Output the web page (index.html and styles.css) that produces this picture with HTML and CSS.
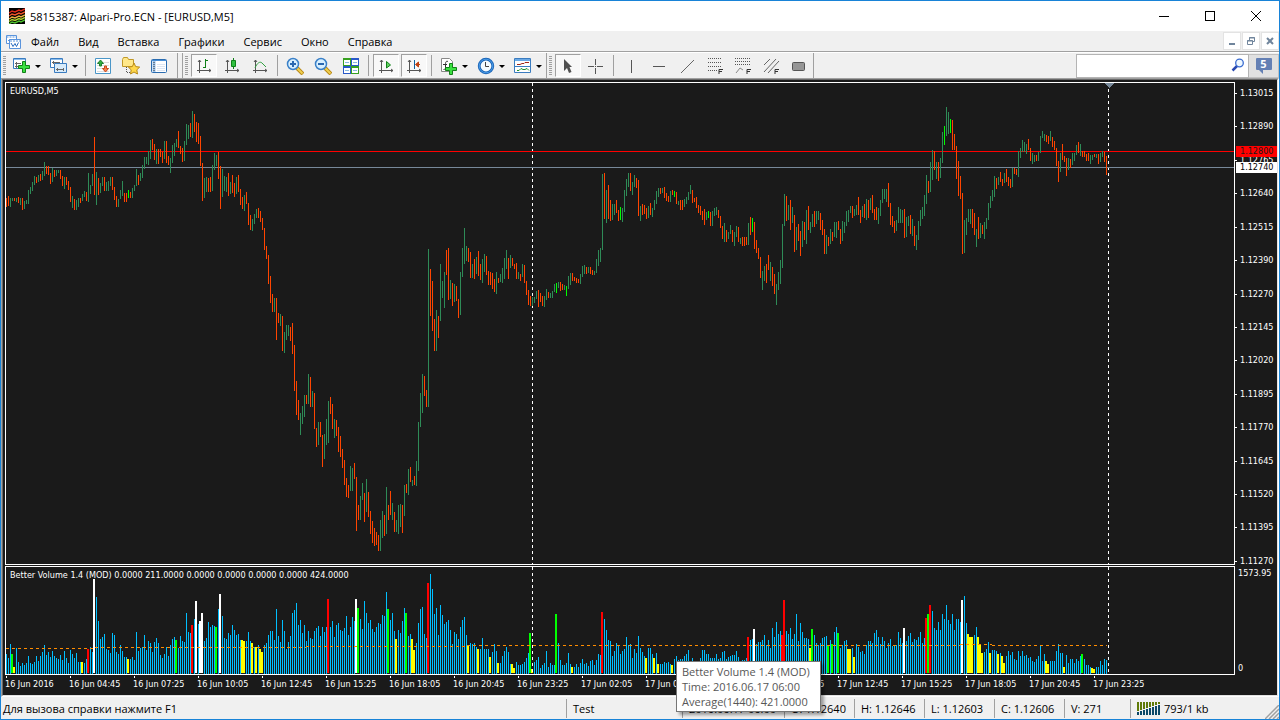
FILE: index.html
```html
<!DOCTYPE html>
<html lang="ru">
<head>
  <meta charset="UTF-8">
  <meta name="viewport" content="width=device-width, initial-scale=1.0">
  <title>5815387: Alpari-Pro.ECN - [EURUSD,M5]</title>
  <link rel="stylesheet" href="styles.css">
</head>
<body>
  <div class="window">
    <header class="title-bar">
      <svg class="app-logo" viewBox="0 0 16 16">
        <rect width="16" height="16" fill="#000"/>
        <g fill="none" stroke-width="1.4">
          <path d="M0 5l3-2 3 1 4-2 2 1 4-2" stroke="#e02a1a"/>
          <path d="M0 8l3-2 3 1 4-2 2 1 4-2" stroke="#f0542a"/>
          <path d="M0 11l3-2 3 1 4-2 2 1 4-2" stroke="#e8b040"/>
          <path d="M0 13.500l3-2 3 1 4-2 2 1 4-2" stroke="#a8d030"/>
          <path d="M0 16l3-2 3 1 4-2 2 1 4-2" stroke="#4cc030"/>
        </g>
      </svg>
      <h1 class="title-text">5815387: Alpari-Pro.ECN - [EURUSD,M5]</h1>
      <div class="window-controls">
        <button class="window-btn" aria-label="Свернуть"><svg viewBox="0 0 10 10"><path d="M0 5.500h10"/></svg></button>
        <button class="window-btn" aria-label="Развернуть"><svg viewBox="0 0 10 10"><path d="M.5 .5h9v9h-9z"/></svg></button>
        <button class="window-btn" aria-label="Закрыть"><svg class="smooth" viewBox="0 0 10 10"><path d="M0 0l10 10M10 0L0 10"/></svg></button>
      </div>
    </header>

    <nav class="menu-bar">
      <svg class="menu-icon" viewBox="0 0 15 15">
        <g fill="#fff" stroke="#5a94dc">
          <path d="M.5 1.500h10v8h-10z"/>
          <path d="M.5 3h10" stroke-dasharray="2 1"/>
          <path d="M2 7l2-2 1 2 2-2" fill="none"/>
          <path d="M3.500 5.500h11v9h-11z"/>
          <path d="M4 7h10" stroke-dasharray="2 1"/>
          <path d="M5 9l2 3.500 2-3 1.500 3 2-4" fill="none" stroke="#2a6cc0"/>
        </g>
      </svg>
      <button class="menu-item">Файл</button>
      <button class="menu-item">Вид</button>
      <button class="menu-item">Вставка</button>
      <button class="menu-item">Графики</button>
      <button class="menu-item">Сервис</button>
      <button class="menu-item">Окно</button>
      <button class="menu-item">Справка</button>
      <div class="mdi-controls">
        <button class="mdi-btn" aria-label="Свернуть график"><svg viewBox="0 0 10 10"><path d="M2 8h6" stroke-width="2"/></svg></button>
        <button class="mdi-btn" aria-label="Восстановить график"><svg viewBox="0 0 10 10"><path d="M3.500 4V1.500h5v4H7M3 2h6M1.500 4.500h5v4h-5zM1 5h6"/></svg></button>
        <button class="mdi-btn" aria-label="Закрыть график"><svg class="smooth" viewBox="0 0 10 10"><path d="M2 2l6 6M8 2L2 8" stroke-width="2"/></svg></button>
      </div>
    </nav>

    <div class="toolbar">
      <div class="tool-group">
        <span class="grip"></span>
        <button class="tool-btn drop" aria-label="Новый график">
          <svg class="icon" viewBox="0 0 18 18">
            <path d="M.5 1.500h12v10H.5z" fill="#fff" stroke="#3a7cc0"/>
            <path d="M1 2.500h11" stroke="#8abcec"/>
            <path d="M2 6.500h6M2 9.500h4M3.500 5v6" stroke="#666" fill="none"/>
            <path d="M9.500 4.500h3v4h4v3h-4v4h-3v-4h-4v-3h4z" fill="#3ae040" stroke="#128018"/>
          </svg>
          <span class="arrow"></span>
        </button>
        <button class="tool-btn drop" aria-label="Профили">
          <svg class="icon" viewBox="0 0 18 18">
            <path d="M.5 1.500h12v9H.5z" fill="#fff" stroke="#3a7cc0"/>
            <path d="M1 2.500h11" stroke="#8abcec"/>
            <path d="M4.500 6.500h12v9h-12z" fill="#d8ebfa" stroke="#3a7cc0"/>
            <path d="M2 5.500h8M3.500 4v3M6 12.500h8M7.500 11v3M13.500 11v3" stroke="#666"/>
          </svg>
          <span class="arrow"></span>
        </button>
        <span class="sep"></span>
        <button class="tool-btn" aria-label="Обзор рынка">
          <svg class="icon" viewBox="0 0 18 18">
            <path d="M1.500 1.500h15v15h-15z" fill="#fff" stroke="#4a96c8"/>
            <path d="M3 5.500h12M3 8.500h12M3 11.500h12M3 14.500h12" stroke="#ddd"/>
            <path d="M6.500 3l3 3.500h-2V9h-2V6.500h-2z" fill="#30b040" stroke="#208030"/>
            <path d="M11.500 15l-3-3.500h2V9h2v2.500h2z" fill="#f08050" stroke="#d04818"/>
          </svg>
        </button>
        <button class="tool-btn" aria-label="Избранное">
          <svg class="icon" viewBox="0 0 18 18">
            <path d="M.5 2.500l1-2h4l1 2h5v7H.5z" fill="#ffe88a" stroke="#c09828"/>
            <path d="M4.500 10v6M5 15.500h5" stroke="#555" stroke-dasharray="1 1"/>
            <path d="M12 6l1.700 3.600 4 .5-2.900 2.700.7 4.200-3.500-2-3.500 2 .7-4.200-2.900-2.700 4-.5z" fill="#ffd84a" stroke="#b88a18"/>
          </svg>
        </button>
        <button class="tool-btn" aria-label="Терминал">
          <svg class="icon" viewBox="0 0 18 18">
            <rect x="1.500" y="2.500" width="15" height="13" rx="1" fill="#fff" stroke="#2a6cb0"/>
            <path d="M2 3.500h14" stroke="#4a90d8"/>
            <path d="M4 4v11" stroke="#9ec4ec" stroke-width="3"/>
            <path d="M4 5v10" stroke="#333" stroke-dasharray="1 1"/>
            <path d="M7 7.500h8M7 9.500h8M7 11.500h8M7 13.500h8" stroke="#dce6f4"/>
          </svg>
        </button>
      </div>

      <div class="tool-group">
        <span class="grip"></span>
        <button class="tool-btn pressed" aria-label="Бары">
          <svg class="icon" viewBox="0 0 18 18">
            <path d="M4.500 3v13M2 13.500h14M3 5l1.500-2L6 5M14 12l2 1.500-2 1.500" fill="none" stroke="#555"/>
            <path d="M10.500 2v9M10.500 3.500H13M8 10.500h2.500" stroke="#108018"/>
          </svg>
        </button>
        <button class="tool-btn" aria-label="Свечи">
          <svg class="icon" viewBox="0 0 18 18">
            <path d="M4.500 3v13M2 13.500h14M3 5l1.500-2L6 5M14 12l2 1.500-2 1.500" fill="none" stroke="#555"/>
            <path d="M10.500 1v11" stroke="#108018"/>
            <path d="M8.500 3.500h4v6h-4z" fill="#30c040" stroke="#108018"/>
          </svg>
        </button>
        <button class="tool-btn" aria-label="Линия">
          <svg class="icon" viewBox="0 0 18 18">
            <path d="M4.500 3v13M2 13.500h14M3 5l1.500-2L6 5M14 12l2 1.500-2 1.500" fill="none" stroke="#555"/>
            <path d="M4 11c2-5 5-7 7-5l4 4" fill="none" stroke="#30a040"/>
          </svg>
        </button>
        <span class="sep"></span>
        <button class="tool-btn" aria-label="Увеличить">
          <svg class="icon" viewBox="0 0 18 18">
            <path d="M11 11l6 6" stroke="#b88818" stroke-width="4"/>
            <path d="M11 11l5.500 5.500" stroke="#f0d050" stroke-width="2"/>
            <circle cx="7" cy="7" r="5.500" fill="#d8f0ff" stroke="#3a80c8" stroke-width="1.500"/>
            <path d="M4 7h6M7 4v6" stroke="#2a68b0" stroke-width="2"/>
          </svg>
        </button>
        <button class="tool-btn" aria-label="Уменьшить">
          <svg class="icon" viewBox="0 0 18 18">
            <path d="M11 11l6 6" stroke="#b88818" stroke-width="4"/>
            <path d="M11 11l5.500 5.500" stroke="#f0d050" stroke-width="2"/>
            <circle cx="7" cy="7" r="5.500" fill="#d8f0ff" stroke="#3a80c8" stroke-width="1.500"/>
            <path d="M4 7h6" stroke="#2a68b0" stroke-width="2"/>
          </svg>
        </button>
        <button class="tool-btn" aria-label="Окна мозаикой">
          <svg class="icon" viewBox="0 0 18 18">
            <path d="M1 1h8v8H1zM9 9h8v8H9z" fill="#38a020"/>
            <path d="M9 1h8v8H9zM1 9h8v8H1z" fill="#2858c8"/>
            <path d="M2 3h6v5H2zM10 3h6v5h-6zM2 11h6v5H2zM10 11h6v5h-6z" fill="#fff"/>
            <path d="M3 5.500h4M11 5.500h4M3 13.500h4M11 13.500h4" stroke="#8ab8e0"/>
          </svg>
        </button>
        <span class="sep"></span>
        <button class="tool-btn pressed" aria-label="Автопрокрутка">
          <svg class="icon" viewBox="0 0 18 18">
            <path d="M4.500 3v13M2 13.500h14M3 5l1.500-2L6 5M14 12l2 1.500-2 1.500" fill="none" stroke="#555"/>
            <path d="M9.500 4.500l4 3.500-4 3z" fill="#60d060" stroke="#108018"/>
          </svg>
        </button>
        <button class="tool-btn pressed" aria-label="Сдвиг графика">
          <svg class="icon" viewBox="0 0 18 18">
            <path d="M4.500 3v13M2 13.500h14M3 5l1.500-2L6 5M14 12l2 1.500-2 1.500" fill="none" stroke="#555"/>
            <path d="M9.500 3v9" stroke="#1060a0"/>
            <path d="M11 7.500h4M13.500 5l-3 2.500 3 2.500z" fill="#c04010" stroke="#c04010"/>
          </svg>
        </button>
        <span class="sep"></span>
        <button class="tool-btn drop" aria-label="Индикаторы">
          <svg class="icon" viewBox="0 0 18 18">
            <path d="M1.500 1.500h8l3 3v10h-11z" fill="#fff" stroke="#888"/>
            <path d="M8 4.500C5.500 3.500 5.500 6 5.500 8v3c0 1-1 1.500-2 1.500M3 7.500h4" fill="none" stroke="#333"/>
            <path d="M9.500 6.500h3v4h4v3h-4v4h-3v-4h-4v-3h4z" fill="#3ae040" stroke="#128018"/>
          </svg>
          <span class="arrow"></span>
        </button>
        <button class="tool-btn drop" aria-label="Периоды">
          <svg class="icon" viewBox="0 0 18 18">
            <circle cx="9" cy="9" r="6.800" fill="#f4fbff" stroke="#1c66b8" stroke-width="2.800"/>
            <circle cx="9" cy="9" r="6.800" fill="none" stroke="#4a9ce8"/>
            <path d="M8.500 5v4.500H12" fill="none" stroke="#444"/>
          </svg>
          <span class="arrow"></span>
        </button>
        <button class="tool-btn drop" aria-label="Шаблоны">
          <svg class="icon" viewBox="0 0 18 18">
            <path d="M.5 1.500h16v14H.5z" fill="#fff" stroke="#3a7cc0"/>
            <path d="M1 3h15" stroke="#6aa8e4" stroke-width="2"/>
            <path d="M1 9.500h15" stroke="#3a7cc0"/>
            <path d="M3 7.500h3l2-1h2l1-1h4" fill="none" stroke="#a02818"/>
            <path d="M3 13.500h2l2-2 2 1h2l2-1 2 2" fill="none" stroke="#209030"/>
          </svg>
          <span class="arrow"></span>
        </button>
      </div>

      <div class="tool-group">
        <span class="grip"></span>
        <button class="tool-btn pressed" aria-label="Курсор">
          <svg class="icon" viewBox="0 0 18 18"><path d="M5 2v12l3-3 2 5 2.500-1-2-5H13z" fill="#505050"/></svg>
        </button>
        <button class="tool-btn" aria-label="Перекрестие">
          <svg class="icon" viewBox="0 0 18 18"><path d="M8.500 2v6M8.500 11v6M1 9.500h6M10 9.500h6M8 9.500h1" stroke="#555"/></svg>
        </button>
        <span class="sep"></span>
        <button class="tool-btn" aria-label="Вертикальная линия">
          <svg class="icon" viewBox="0 0 18 18"><path d="M9.500 3v13" stroke="#555"/></svg>
        </button>
        <button class="tool-btn" aria-label="Горизонтальная линия">
          <svg class="icon" viewBox="0 0 18 18"><path d="M3 9.500h12" stroke="#555"/></svg>
        </button>
        <button class="tool-btn" aria-label="Трендовая линия">
          <svg class="icon" viewBox="0 0 18 18"><path d="M3 16L16 3" stroke="#666"/></svg>
        </button>
        <button class="tool-btn" aria-label="Уровни Фибоначчи">
          <svg class="icon" viewBox="0 0 18 18">
            <path d="M2 1.500h14M2 5.500h14M2 9.500h14M2 13.500h9" stroke="#555" stroke-dasharray="1 1"/>
            <path d="M13 17v-4.500h4M13 14.500h3" fill="none" stroke="#333"/>
          </svg>
        </button>
        <button class="tool-btn" aria-label="Расширение Фибоначчи">
          <svg class="icon" viewBox="0 0 18 18">
            <path d="M1 1.500h16M1 4.500h16M1 7.500h16" stroke="#555" stroke-dasharray="1 1"/>
            <path d="M2 16l4-5 3 2" fill="none" stroke="#888"/>
            <path d="M13 17v-4.500h4M13 14.500h3" fill="none" stroke="#333"/>
          </svg>
        </button>
        <button class="tool-btn" aria-label="Канал Фибоначчи">
          <svg class="icon" viewBox="0 0 18 18">
            <path d="M2 8l6-6M2 15L14 2M6 16L17 4" stroke="#666"/>
            <path d="M13 17v-4.500h4M13 14.500h3" fill="none" stroke="#333"/>
          </svg>
        </button>
        <button class="tool-btn" aria-label="Прямоугольник">
          <svg class="icon" viewBox="0 0 18 18"><rect x="2.500" y="5.500" width="12" height="8" rx="1" fill="#969696" stroke="#555"/></svg>
        </button>
      </div>

      <div class="search-box">
        <input class="search-input" type="text" aria-label="Поиск">
        <svg class="search-icon" viewBox="0 0 14 14">
          <path d="M1.500 12.500l5-5" stroke="#2848b0" stroke-width="2.500"/>
          <circle cx="8.500" cy="5" r="3.800" fill="#eef8ff" stroke="#3a6cd0" stroke-width="1.300"/>
        </svg>
      </div>
      <button class="chat-btn"><span class="bubble">5</span></button>
    </div>

    <main class="chart-frame">
      <div class="chart-window">
        <section class="pane">
          <svg class="plot" id="pricePlot"></svg>
          <span class="pane-title">EURUSD,M5</span>
        </section>
        <div class="price-axis">
          <ol class="price-list">
            <li>1.13015</li>
            <li>1.12890</li>
            <li>1.12765</li>
            <li>1.12640</li>
            <li>1.12515</li>
            <li>1.12390</li>
            <li>1.12270</li>
            <li>1.12145</li>
            <li>1.12020</li>
            <li>1.11895</li>
            <li>1.11770</li>
            <li>1.11645</li>
            <li>1.11520</li>
            <li>1.11395</li>
            <li>1.11270</li>
          </ol>
          <span class="price-tag ask">1.12800</span>
          <span class="price-tag bid">1.12740</span>
        </div>

        <section class="pane">
          <svg class="plot" id="volumePlot"></svg>
          <span class="pane-title">Better Volume 1.4 (MOD) 0.0000 211.0000 0.0000 0.0000 0.0000 0.0000 424.0000</span>
        </section>
        <div class="volume-axis">
          <span>1573.95</span>
          <span>0</span>
        </div>

        <ol class="time-axis">
          <li>16 Jun 2016</li>
          <li>16 Jun 04:45</li>
          <li>16 Jun 07:25</li>
          <li>16 Jun 10:05</li>
          <li>16 Jun 12:45</li>
          <li>16 Jun 15:25</li>
          <li>16 Jun 18:05</li>
          <li>16 Jun 20:45</li>
          <li>16 Jun 23:25</li>
          <li>17 Jun 02:05</li>
          <li>17 Jun 04:45</li>
          <li>17 Jun 07:25</li>
          <li>17 Jun 10:05</li>
          <li>17 Jun 12:45</li>
          <li>17 Jun 15:25</li>
          <li>17 Jun 18:05</li>
          <li>17 Jun 20:45</li>
          <li>17 Jun 23:25</li>
        </ol>
      </div>
    </main>

    <footer class="status-bar">
      <span class="status-cell help">Для вызова справки нажмите F1</span>
      <span class="status-cell profile">Test</span>
      <span class="status-cell date">2016.06.17 06:00</span>
      <span class="status-cell">O: 1.12640</span>
      <span class="status-cell">H: 1.12646</span>
      <span class="status-cell">L: 1.12603</span>
      <span class="status-cell">C: 1.12606</span>
      <span class="status-cell volume">V: 271</span>
      <span class="status-cell traffic">
        <svg class="traffic-icon" viewBox="0 0 23 13">
          <path d="M1 0v9M4 0v8M7 0v7M10 0v6M13 0v5M16 0v4M19 0v3M22 0v2" stroke="#5f7a08" stroke-width="2"/>
          <path d="M1 10v3M4 9v4M7 8v5M10 7v6M13 6v7M16 5v8M19 4v9M22 3v10" stroke="#0c4868" stroke-width="2"/>
        </svg>
        793/1 kb
      </span>
      <svg class="resize-grip" viewBox="0 0 14 14"><path d="M0 14L14 0M4 14L14 4M8 14l6-6M12 14l2-2" stroke="#a0a0a0" stroke-width="1.500"/></svg>
    </footer>

    <div class="tooltip" role="tooltip">
      <p>Better Volume 1.4 (MOD)</p>
      <p>Time: 2016.06.17 06:00</p>
      <p>Average(1440): 421.0000</p>
    </div>
  </div>

  <script src="chart.js"></script>
</body>
</html>
```

FILE: styles.css
```css
:root {
  --accent: #1883d7;
  --face: #f0f0f0;
  --line: #a0a0a0;
  --line-dark: #696969;
  --line-light: #e3e3e3;
  --chart-bg: #1a1a1a;
  --ui-font: "Open Sans", "Noto Sans", sans-serif;
  --chart-font: "DejaVu Sans Condensed", "DejaVu Sans", sans-serif;
}
* {
  box-sizing: border-box;
}
body {
  margin: 0;
  font-family: var(--ui-font);
  font-size: 11px;
  color: #000;
}
button {
  margin: 0;
  padding: 0;
  border: none;
  background: none;
  font: inherit;
  color: inherit;
}
svg {
  display: block;
}
ol {
  list-style: none;
  margin: 0;
  padding: 0;
}
.window {
  position: relative;
  height: 100vh;
  display: flex;
  flex-direction: column;
  border: 1px solid var(--accent);
  background: var(--face);
  overflow: hidden;
}

/* title bar */
.title-bar {
  flex: none;
  height: 30px;
  display: flex;
  align-items: center;
  padding-left: 8px;
  background: #fff;
}
.app-logo {
  width: 16px;
  height: 16px;
}
.title-text {
  margin: 0 auto 0 5px;
  font-size: 11px;
  font-weight: 400;
}
.window-controls {
  display: flex;
}
.window-btn {
  width: 46px;
  height: 30px;
  display: flex;
  align-items: center;
  justify-content: center;
}
.window-btn svg {
  width: 10px;
  height: 10px;
  fill: none;
  stroke: #000;
  shape-rendering: crispEdges;
}
.window-btn .smooth,
.mdi-btn .smooth {
  shape-rendering: auto;
}

/* menu */
.menu-bar {
  flex: none;
  height: 21px;
  display: flex;
  align-items: center;
  gap: 1px;
  padding-left: 5px;
  border-bottom: 1px solid var(--line);
}
.menu-icon {
  width: 15px;
  height: 15px;
}
.menu-item {
  padding: 0 9px;
}
.mdi-controls {
  margin-left: auto;
  display: flex;
  gap: 1px;
}
.mdi-btn {
  width: 18px;
  height: 18px;
  display: flex;
  align-items: center;
  justify-content: center;
  background: #fff;
  border: 1px solid var(--line-light);
}
.mdi-btn svg {
  width: 10px;
  height: 10px;
  fill: none;
  stroke: #70859c;
}

/* toolbar */
.toolbar {
  flex: none;
  height: 26px;
  display: flex;
  align-items: center;
  border-top: 1px solid #fff;
}
.tool-group {
  height: 25px;
  display: flex;
  align-items: center;
  border-right: 1px solid var(--line);
}
.tool-group:first-child {
  margin-right: 4px;
  padding-right: 4px;
}
.tool-group:nth-child(2) {
  border-left: 1px solid var(--line);
}
.grip {
  width: 3px;
  height: 19px;
  margin: 0 2px;
  background: repeating-linear-gradient(to bottom, var(--line) 0 1px, var(--face) 1px 2px);
}
.sep {
  width: 1px;
  height: 21px;
  margin: 0 3px;
  background: var(--line);
}
.tool-btn {
  width: 28px;
  height: 23px;
  display: flex;
  align-items: flex-start;
  padding: 3px 0 0 5px;
}
.tool-btn.drop {
  width: 37px;
  gap: 4px;
}
.tool-btn.pressed {
  width: 26px;
  margin: 0 1px;
  padding: 2px 0 0 3px;
  background: #f8f8f8;
  border: 1px solid;
  border-color: var(--line) #fff #fff var(--line);
}
.icon {
  flex: none;
  width: 18px;
  height: 18px;
}
.arrow {
  margin-top: 8px;
  border: 3px solid transparent;
  border-top-color: #000;
  border-bottom: none;
}
.search-box {
  position: relative;
  width: 173px;
  height: 24px;
  margin-left: auto;
}
.search-input {
  width: 100%;
  height: 100%;
  padding: 0 24px 0 4px;
  border: 1px solid #b4b4b4;
  background: #fff;
  font: inherit;
}
.search-icon {
  position: absolute;
  top: 4px;
  right: 4px;
  width: 14px;
  height: 14px;
}
.chat-btn {
  width: 30px;
  height: 24px;
  display: flex;
  align-items: center;
  justify-content: center;
  background: #e1e1e1;
  border: 1px solid #c0c0c0;
  border-left: none;
}
.bubble {
  position: relative;
  width: 16px;
  height: 12px;
  margin-bottom: 3px;
  border-radius: 1px;
  background: #6480b4;
  color: #fff;
  font-weight: 700;
  line-height: 12px;
}
.bubble::after {
  content: "";
  position: absolute;
  left: 3px;
  top: 12px;
  border-top: 4px solid #6480b4;
  border-left: 4px solid transparent;
}

/* chart */
.chart-frame {
  flex: 1;
  min-height: 0;
  display: flex;
  border: 1px solid;
  border-color: var(--line) #fff #fff var(--line);
}
.chart-window {
  flex: 1;
  min-width: 0;
  display: grid;
  grid-template-columns: minmax(0, 1fr) 42px;
  grid-template-rows: minmax(0, 1fr) 109px 19px;
  row-gap: 1px;
  padding: 2px 0 0 2px;
  border: 1px solid;
  border-color: var(--line-dark) var(--line-light) var(--line-light) var(--line-dark);
  background: var(--chart-bg);
  color: #fff;
  font-family: var(--chart-font);
  font-size: 9px;
  line-height: 11px;
}
.pane {
  position: relative;
  border: 1px solid #fff;
}
.plot {
  width: 100%;
  height: 100%;
  shape-rendering: crispEdges;
}
.pane-title {
  position: absolute;
  top: 3px;
  left: 4px;
  white-space: nowrap;
}
.price-axis {
  position: relative;
}
.price-list {
  height: calc(100% + 2px);
  display: flex;
  flex-direction: column;
  justify-content: space-between;
  padding-top: 6px;
}
.price-list li {
  display: flex;
  align-items: center;
  gap: 3px;
}
.price-list li::before {
  content: "";
  width: 2px;
  height: 1px;
  background: #fff;
}
.price-tag {
  position: absolute;
  left: 1px;
  right: 0;
  padding-left: 4px;
}
.price-tag.ask {
  top: 64px;
  background: #f00;
  color: var(--chart-bg);
}
.price-tag.bid {
  top: 80px;
  background: #fff;
  color: #000;
}
.volume-axis {
  display: flex;
  flex-direction: column;
  justify-content: space-between;
  padding: 2px 0 1px 3px;
}
.time-axis {
  grid-column: 1 / -1;
  display: flex;
  overflow: hidden;
}
.time-axis li {
  flex: none;
  width: 64px;
  white-space: nowrap;
}
.time-axis li::before {
  content: "";
  display: block;
  width: 1px;
  height: 2px;
  margin: 0 0 1px 1px;
  background: #fff;
}

/* status bar */
.status-bar {
  position: relative;
  flex: none;
  height: 22px;
  display: flex;
  align-items: center;
}
.status-cell {
  width: 70px;
  height: 19px;
  padding-left: 6px;
  border-left: 1px solid var(--line);
  line-height: 19px;
  white-space: nowrap;
}
.status-cell.help {
  flex: 1;
  padding-left: 2px;
  border-left: none;
}
.status-cell.profile {
  width: 116px;
}
.status-cell.date {
  width: 102px;
}
.status-cell.volume {
  width: 66px;
}
.status-cell.traffic {
  width: 149px;
  display: flex;
  align-items: center;
  gap: 4px;
}
.traffic-icon {
  width: 23px;
  height: 13px;
}
.resize-grip {
  position: absolute;
  right: 0;
  bottom: 0;
  width: 14px;
  height: 14px;
}
.tooltip {
  position: absolute;
  left: 675px;
  bottom: 7px;
  padding: 2px 10px 2px 5px;
  background: #fff;
  border: 1px solid #767676;
  box-shadow: 3px 3px 3px rgba(0, 0, 0, 0.35);
  color: #575757;
  line-height: 15px;
  white-space: nowrap;
}
.tooltip p {
  margin: 0;
}
```

FILE: chart.js
```js
const SVG_NS = 'http://www.w3.org/2000/svg';
const STEP = 2;
const PRICE_TOP = 83;
const VOLUME_BASE = 107;

// r - down bar, s - up bar, l - highlighted bar; high-low of every bar
const priceBars = `
r198-207 r196-206 s198-207 s198-201 r198-201 s198-202 r197-203 s198-205 r198-210 s201-209
s200-204 s190-204 s187-194 s182-191 s176-185 r177-183 s175-182 r174-181 s171-180 s162-176
r166-174 r166-175 r173-184 s168-182 r170-177 s170-176 s170-173 r170-179 r176-186 s177-189
r177-185 r181-190 r187-202 s196-208 r199-210 s200-210 s198-207 r198-203 s194-201 s191-197
r192-201 s173-202 s185-194 s174-186 r137-195 s172-205 r178-195 s183-193 s177-186 r177-191
s182-191 s181-191 s177-186 r177-190 r187-200 r196-207 s199-207 s190-199 s181-196 r193-202
r193-202 l190-198 r192-198 s188-198 s185-191 s169-186 r175-185 s173-181 s165-178 s157-169
s157-164 s151-165 s140-159 r139-150 r144-160 s149-164 r149-164 r149-157 r152-163 s141-159
r141-163 r156-165 s158-173 s145-163 s143-156 s139-147 r131-148 r146-154 r148-162 s141-161
s124-145 s125-139 r123-137 s111-138 r114-132 r122-142 r123-144 r136-166 r163-201 s178-198
s177-192 r178-192 r177-192 s165-191 s153-170 s155-166 r152-179 r166-209 s169-197 s176-191
s177-192 r173-196 s182-194 r175-193 r183-197 s177-194 r175-192 r189-205 r197-209 s195-211
r192-204 r203-225 r215-230 s219-231 s214-224 s209-218 r208-218 r211-222 r218-230 r228-250
r246-259 r255-284 r276-303 r294-312 s298-312 r298-340 r313-323 s314-326 r316-351 s332-353
s325-340 s325-336 r327-341 r323-354 r345-391 r381-415 r400-420 s413-435 s406-424 s395-417
r395-404 s374-404 r377-407 s391-407 r393-429 r428-447 s422-445 r422-437 r435-467 s434-459
s419-445 s401-443 r397-414 r404-429 s419-438 r420-436 r427-452 r436-457 r449-468 r460-485
r478-497 r485-498 s466-491 s468-491 r463-479 r477-531 r505-520 s496-520 s483-500 r493-522
s479-512 r492-517 r511-534 r521-543 r528-546 r532-545 r535-551 s520-551 s511-538 r515-536
s487-534 r505-520 r491-515 s503-520 r512-532 s520-532 s505-534 s504-527 r505-533 s485-516
r484-493 s469-495 r467-482 s480-486 r476-485 s461-486 s422-471 s393-427 s374-413 r376-396
r390-407 s249-407 r269-316 r281-331 r319-351 s310-351 r316-338 s264-321 s281-298 s272-308
r250-275 r248-300 s280-299 r283-306 s284-302 r286-301 r299-318 s272-315 s248-277 s228-264
s246-261 r248-262 r252-278 s264-278 r259-279 s257-274 r251-276 r264-280 s259-283 s254-272
r256-275 r271-285 r272-285 r273-289 r279-292 s272-294 r278-283 s274-282 s268-283 s258-279
s250-269 r258-279 s255-268 r258-266 r264-269 r263-279 s272-279 r274-281 s264-277 r265-283
r281-295 r290-305 r296-306 s297-306 s297-303 s291-299 r290-307 r293-302 r296-306 s296-307
s289-300 r292-298 s293-298 s291-298 s284-292 l283-293 s282-288 r282-291 r284-290 s285-290
l286-296 s276-289 s273-285 r273-281 r277-281 r278-283 r279-283 s274-284 s266-277 s265-274
r267-274 s267-273 r267-274 r270-275 s271-275 s259-273 s250-266 s248-262 s174-250 r173-219
s190-223 r185-219 r200-221 s204-220 s204-215 r200-213 r210-221 l207-220 s208-222 s190-212
s179-196 s173-187 r173-191 s182-195 s175-187 r178-188 r180-216 s206-221 r204-215 r205-214
r208-219 s206-218 r203-215 s208-217 s200-210 s191-204 s188-197 r188-194 s188-193 r187-198
r193-201 r196-202 s191-202 r190-195 l191-197 r192-204 s201-205 r200-210 r200-210 s199-207
s197-204 s192-200 s185-194 r190-203 r198-202 r197-208 r205-213 r206-215 r211-220 r209-225
s212-220 l211-218 r212-226 s211-226 s208-216 s207-215 r210-218 r216-228 r226-239 s223-242
r230-242 s232-239 s225-234 r230-242 s232-246 s226-237 r227-242 s238-244 r237-246 r237-246
r237-245 s223-245 r217-235 l218-232 r222-249 r240-253 r248-259 r257-278 s271-290 s266-281
r264-283 r255-270 s262-281 r267-286 r274-294 s284-305 s272-290 s260-284 s224-268 s194-226
r196-221 s205-220 r200-230 s207-223 r215-252 s227-250 r224-241 r231-256 s221-247 r222-240
s210-244 r206-230 s222-233 s214-227 r211-227 s211-224 s211-220 r213-230 r220-235 r229-254
s235-254 r237-246 s229-244 r232-241 s222-237 s222-238 r221-230 r229-244 s221-241 s222-233
s211-226 s210-222 s206-213 r206-218 s209-216 s205-215 r197-215 r210-223 s206-217 r204-218
s199-220 r200-218 s198-210 r195-213 r209-220 r207-220 s208-224 s200-216 s189-203 s189-199
s189-202 r183-207 r203-225 r216-227 r221-233 s220-231 s207-223 s209-223 s210-223 r209-238
s217-237 s216-226 r215-234 s219-236 r226-246 s235-250 s221-240 s210-226 s207-219 s195-216
s175-204 r181-193 s162-192 s150-180 r151-170 s162-179 r162-181 s158-178 s132-163 l126-145
s107-136 s112-134 l119-133 r120-150 r134-150 r146-179 r161-196 r176-199 r193-254 s220-253
s218-235 s209-222 s209-224 r209-228 r213-235 s229-247 r217-239 s223-238 r225-234 s222-239
s218-229 s203-220 s196-208 s190-201 s176-197 r178-189 s177-185 r172-182 r179-186 s173-183
r169-182 r177-186 r179-188 s168-187 r168-174 r169-175 s151-177 s148-158 s140-152 s142-152
s144-154 r139-150 r148-161 s153-164 s155-162 r155-161 s152-161 s136-153 s131-138 s134-141
r135-142 r136-144 s131-141 r137-147 r141-150 r148-166 r161-182 s153-172 r144-160 r156-162
r158-176 s158-170 r159-168 s153-165 s153-161 s145-155 r142-153 s144-156 r151-157 r151-157
r154-161 r153-161 s155-164 s155-160 r154-157 s154-158 r154-164 s153-162 s151-157 r152-162
r156-175`;

// bar heights; w/r/g/y prefix marks a climax, churn or low volume bar
const volumeBars = `
20 16 30 g20 y7 26 12 8 11 9 11 18 11 10 12 18 13 18 22 29 19 22 17 23 18 16 15 19 14 23
16 11 24 20 16 21 12 12 y12 11 15 r25 27 22 w95 77 53 35 37 40 25 24 21 41 39 22 20 29 23 17
17 y15 15 17 14 42 23 26 27 39 24 33 31 22 32 36 31 19 16 20 27 18 29 35 37 g34 26 38 33 32
61 42 41 r49 55 w73 50 w53 w61 33 36 52 47 49 48 g47 65 w80 58 36 35 41 39 49 44 39 40 34 y34 y33
33 42 33 y31 27 y27 29 y25 y22 29 31 39 43 43 34 65 38 32 54 43 25 32 38 61 64 71 49 54 41 49
33 43 36 35 43 46 48 38 47 42 47 r75 47 53 37 49 51 44 43 46 58 39 47 57 53 w75 g66 55 45 73
61 51 54 45 42 47 51 50 59 58 82 g65 54 61 43 y35 44 41 53 66 g61 38 40 y35 y24 31 51 65 67 40
36 r91 100 85 60 66 39 69 59 50 52 54 44 30 42 40 35 47 54 57 39 y28 31 30 31 27 y25 25 36 25
25 25 y17 22 30 23 y11 11 18 23 27 22 10 y10 y6 12 9 9 10 12 16 21 g41 y5 12 14 17 6 9 11
23 7 11 9 9 g60 31 14 9 9 11 21 10 y7 7 10 7 11 15 10 11 8 13 14 9 14 20 19 r62 55
44 34 33 18 23 31 28 20 23 25 37 29 30 16 25 21 38 26 22 18 y16 26 26 20 y16 21 y10 10 10 12
11 12 10 y9 15 18 14 15 15 18 20 24 13 16 11 10 10 16 24 24 20 20 16 16 16 20 15 16 22 23
15 17 18 19 19 23 17 11 14 14 16 r37 34 35 w45 30 32 32 34 39 29 34 26 46 37 52 40 43 r39 r74
43 40 46 35 40 60 33 51 42 36 36 35 y26 g45 39 31 29 31 36 37 38 g29 34 g30 42 47 g41 26 29 33
34 y25 y25 26 y17 30 27 22 23 20 29 33 33 31 41 44 37 30 37 33 26 31 35 28 28 29 42 36 31 w46
33 38 41 32 35 34 37 42 31 36 r56 g60 r69 63 46 44 52 44 60 55 69 54 50 60 44 55 55 52 w74 78
51 y40 y37 y37 39 47 y37 y29 y21 22 25 32 y21 24 24 23 y20 21 y18 y11 18 23 19 22 15 14 23 18 23 18
19 16 17 13 12 15 18 28 13 20 y13 y10 13 13 13 23 30 21 21 y7 19 11 15 15 11 15 13 18 g20 15
9 9 7 y6 y5 7 7 13 9 15 14`;

const priceColors = { r: '#ff4500', s: '#2e8b57', l: '#00ff00' };
const volumeColors = { w: '#ffffff', r: '#ff0000', g: '#00ff00', y: '#ffff00' };

function addPath(svg, d, attrs) {
  const path = document.createElementNS(SVG_NS, 'path');
  path.setAttribute('d', d);
  Object.entries(attrs).forEach(([name, value]) => path.setAttribute(name, value));
  svg.appendChild(path);
}

function addDaySeparators(svg) {
  addPath(svg, 'M526.5 0V600M1102.5 0V600', { stroke: '#fff', 'stroke-dasharray': '3 3' });
}

function drawPrices(svg) {
  addDaySeparators(svg);
  const paths = { r: '', s: '', l: '' };
  priceBars.trim().split(/\s+/).forEach((bar, i) => {
    const [high, low] = bar.slice(1).split('-').map(Number);
    paths[bar[0]] += `M${i * STEP} ${high - PRICE_TOP}h1v${low - high}h-1z`;
  });
  addPath(svg, 'M0 68.5H3000', { stroke: '#ff0000' });
  addPath(svg, 'M0 84.5H3000', { stroke: '#778899' });
  Object.keys(paths).forEach((key) => addPath(svg, paths[key], { fill: priceColors[key] }));
  addPath(svg, 'M1099 0h9l-4.500 5z', { fill: '#778899' });
}

function drawVolumes(svg) {
  let plain = '';
  const marked = { w: '', r: '', g: '', y: '' };
  volumeBars.trim().split(/\s+/).forEach((bar, i) => {
    const x = i * STEP;
    if (marked[bar[0]] === undefined) {
      plain += `M${x} ${VOLUME_BASE - bar}h1v${bar}h-1z`;
    } else {
      const height = Number(bar.slice(1));
      marked[bar[0]] += `M${x - 1} ${VOLUME_BASE - height}h2v${height - 1}h-2z`;
    }
  });
  addPath(svg, plain, { fill: '#00bfff' });
  Object.keys(marked).forEach((key) => addPath(svg, marked[key], { fill: volumeColors[key] }));
  addPath(svg, 'M0 81.5H89M89 80.5H300M300 79.5H461M461 78.5H954M954 77.5H986M986 78.5H1101', {
    stroke: '#ff8c00',
    'stroke-dasharray': '3 3'
  });
  addDaySeparators(svg);
}

drawPrices(document.getElementById('pricePlot'));
drawVolumes(document.getElementById('volumePlot'));
```
